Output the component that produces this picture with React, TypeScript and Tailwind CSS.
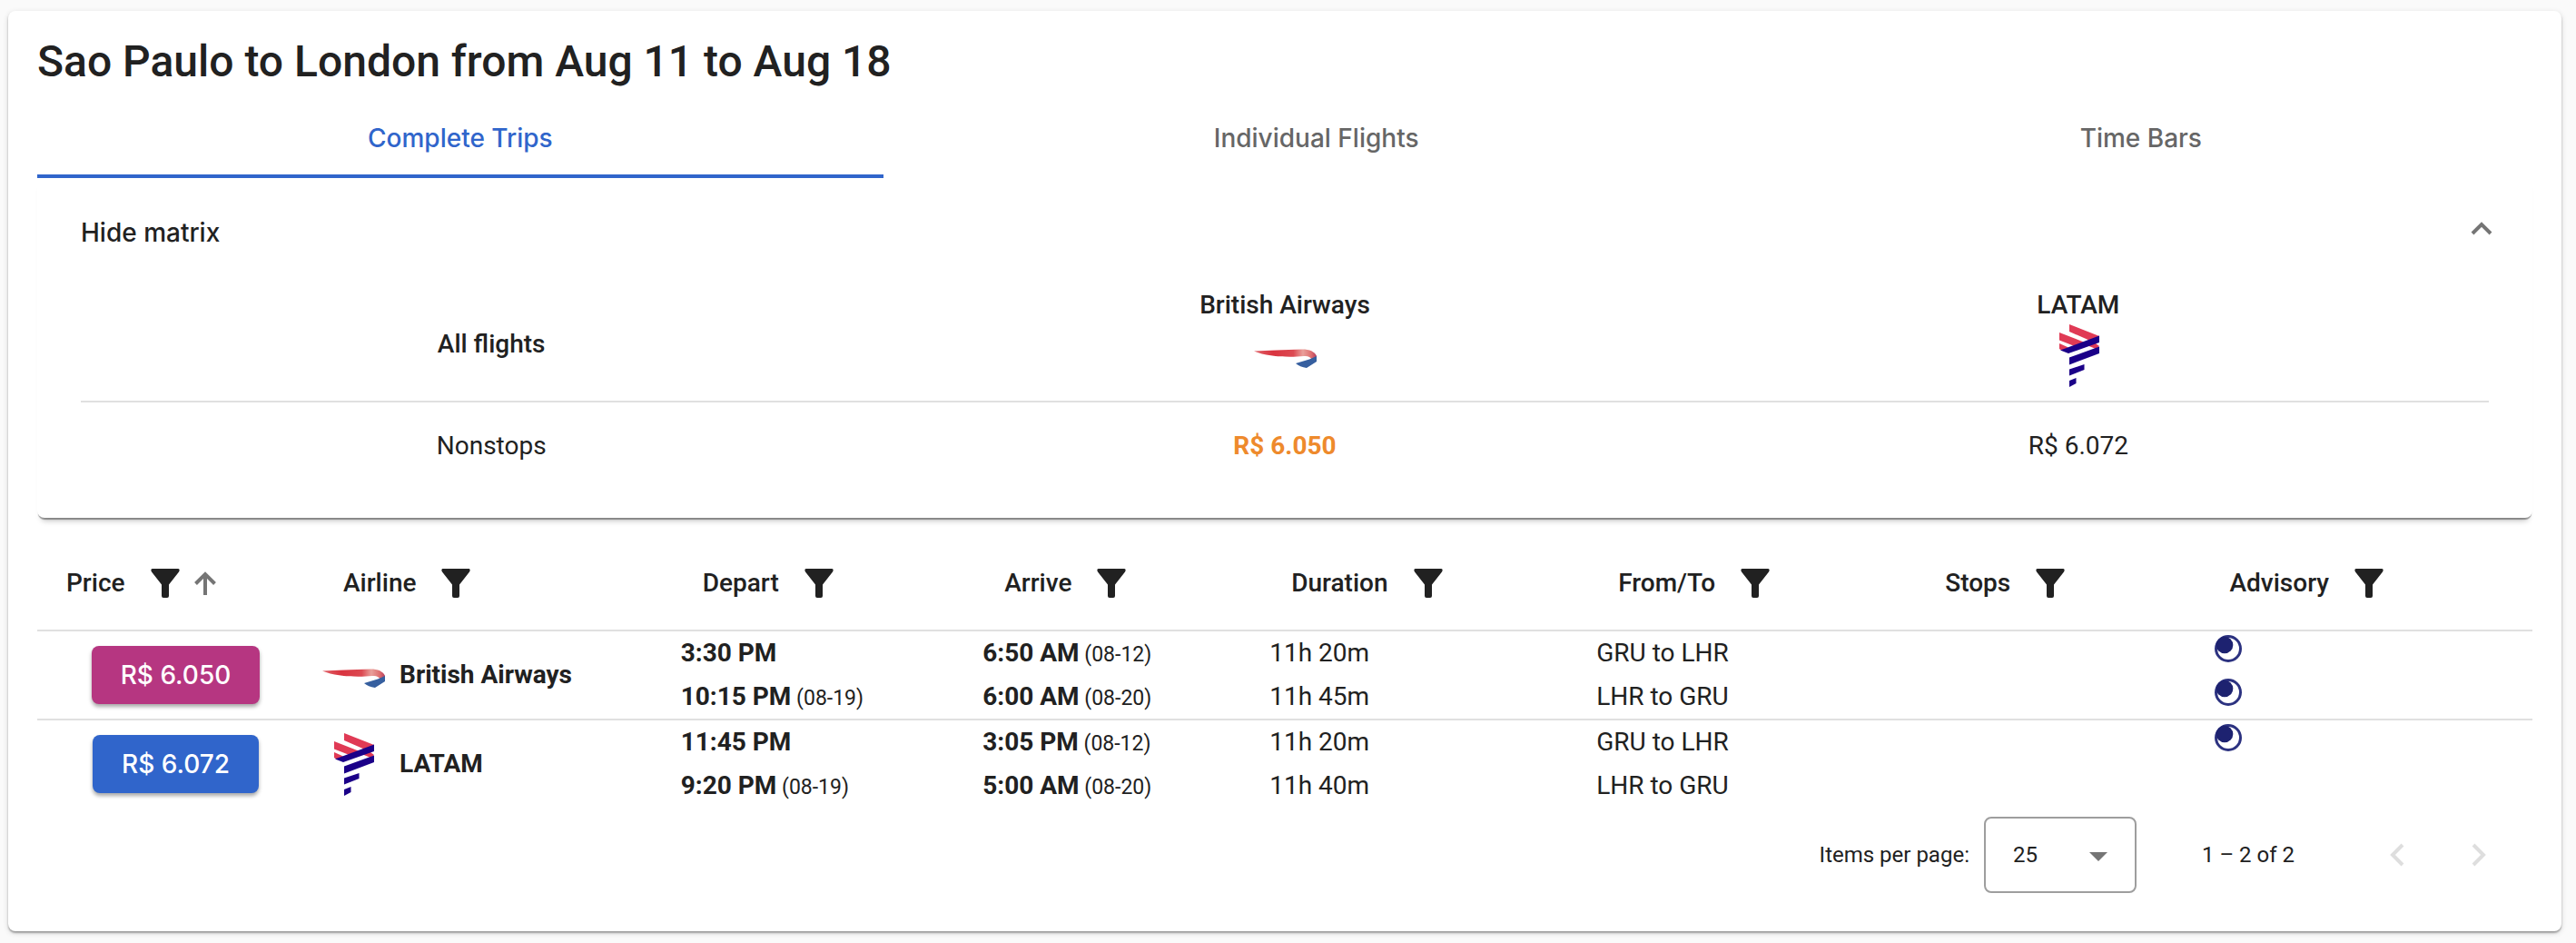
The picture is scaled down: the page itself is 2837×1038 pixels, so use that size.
import { useState } from 'react'

type Leg = {
  depart: string
  departDate?: string
  arrive: string
  arriveDate?: string
  duration: string
  route: string
  overnight?: boolean
}

type Trip = {
  price: string
  best?: boolean
  airline: string
  legs: Leg[]
}

const TABS = ['Complete Trips', 'Individual Flights', 'Time Bars']

const COLUMNS = [
  { label: 'Price', width: 'w-[11.1%]' },
  { label: 'Airline', width: 'w-[14.4%]' },
  { label: 'Depart', width: 'w-[12.1%]' },
  { label: 'Arrive', width: 'w-[11.5%]' },
  { label: 'Duration', width: 'w-[13.1%]' },
  { label: 'From/To', width: 'w-[13.1%]' },
  { label: 'Stops', width: 'w-[11.4%]' },
  { label: 'Advisory', width: 'w-[13.3%]' },
]

const TRIPS: Trip[] = [
  {
    price: 'R$ 6.050',
    best: true,
    airline: 'British Airways',
    legs: [
      { depart: '3:30 PM', arrive: '6:50 AM', arriveDate: '08-12', duration: '11h 20m', route: 'GRU to LHR', overnight: true },
      { depart: '10:15 PM', departDate: '08-19', arrive: '6:00 AM', arriveDate: '08-20', duration: '11h 45m', route: 'LHR to GRU', overnight: true },
    ],
  },
  {
    price: 'R$ 6.072',
    airline: 'LATAM',
    legs: [
      { depart: '11:45 PM', arrive: '3:05 PM', arriveDate: '08-12', duration: '11h 20m', route: 'GRU to LHR', overnight: true },
      { depart: '9:20 PM', departDate: '08-19', arrive: '5:00 AM', arriveDate: '08-20', duration: '11h 40m', route: 'LHR to GRU' },
    ],
  },
]

function BritishAirwaysLogo() {
  return (
    <svg viewBox="0 0 70 70" className="size-[70px] shrink-0" aria-hidden="true">
      <defs>
        <linearGradient id="ba-red" x1="0" x2="1" y1="0" y2="0">
          <stop offset="0" stopColor="#e0646a" />
          <stop offset="0.3" stopColor="#d9333f" />
          <stop offset="0.62" stopColor="#dc4a52" />
          <stop offset="0.77" stopColor="#e9a09b" />
          <stop offset="0.9" stopColor="#df6f70" />
          <stop offset="1" stopColor="#b0375a" />
        </linearGradient>
      </defs>
      <path d="M1 30.500C16 30 34 29 54 28.500C64 28.500 69 32 71 38L65 40C63 36.500 60 35.500 56 36C40 37.500 16 37 1 30.500Z" fill="url(#ba-red)" />
      <path d="M70 36V42L59 49C54 48.500 50 46.500 47 44L62 39.500Z" fill="#365f9f" />
    </svg>
  )
}

function LatamLogo() {
  return (
    <svg viewBox="0 0 70 70" className="size-[70px] shrink-0" aria-hidden="true">
      <g fill="#e03a55">
        <path d="M25 1L58 14L48 19L25 9Z" />
        <path d="M14 10L42 21L32 25.500L14 18.500Z" />
        <path d="M14 22L24 26.500L17 30L14 28Z" />
        <path d="M42 23L50 19L58 25L54 28Z" />
      </g>
      <g fill="#1b0088">
        <path d="M58 13.500V21L24 33L15 29.500Z" />
        <path d="M58 25.500V33L25 45.500V37.500Z" />
        <path d="M41.500 45V51L25 57.500V50.500Z" />
        <path d="M32.500 60V66L25 70V63Z" />
      </g>
    </svg>
  )
}

function AirlineLogo({ name }: { name: string }) {
  return name === 'LATAM' ? <LatamLogo /> : <BritishAirwaysLogo />
}

function OvernightIcon() {
  return (
    <svg viewBox="0 0 30 30" className="size-[30px]" role="img" aria-label="Overnight flight">
      <circle cx="15" cy="15" r="13.500" fill="#fff" stroke="#2c3280" strokeWidth="3" />
      <circle cx="11" cy="11" r="9.300" fill="#1d2270" />
    </svg>
  )
}

function FunnelIcon() {
  return (
    <svg viewBox="0 0 32 32" className="size-8" fill="#212121" aria-hidden="true">
      <path d="M2 0H30C32 0 32 2 31 3.500L20 17.500V30Q20 32 18 32H14Q12 32 12 30V17.500L1 3.500C0 2 0 0 2 0Z" />
    </svg>
  )
}

function SortArrowIcon() {
  return (
    <svg viewBox="0 0 24 26" className="h-[26px] w-6" fill="none" stroke="#757575" strokeWidth="4" aria-hidden="true">
      <path d="M12 26V3M1.500 13.500L12 3L22.500 13.500" />
    </svg>
  )
}

function Chevron({ direction }: { direction: 'up' | 'left' | 'right' }) {
  const d = {
    up: 'M14 29L24 19L34 29',
    left: 'M29 13L18 24L29 35',
    right: 'M19 13L30 24L19 35',
  }[direction]
  return (
    <svg viewBox="0 0 48 48" className="size-12" fill="none" stroke="currentColor" strokeWidth="4" aria-hidden="true">
      <path d={d} />
    </svg>
  )
}

function Time({ time, date }: { time: string; date?: string }) {
  return (
    <div>
      <b className="font-bold">{time}</b>
      {date && <span className="text-[23px] leading-none"> ({date})</span>}
    </div>
  )
}

function PriceMatrix() {
  const [open, setOpen] = useState(true)

  return (
    <section className="rounded-b-lg bg-white px-12 pb-8 shadow-[0_3px_1px_-1px_rgba(0,0,0,0.35),0_8px_6px_-5px_rgba(0,0,0,0.25)]">
      <button
        type="button"
        aria-expanded={open}
        onClick={() => setOpen(!open)}
        className="flex h-[120px] w-full items-center justify-between font-['Inter',sans-serif] font-medium"
      >
        {open ? 'Hide matrix' : 'Show matrix'}
        <span className="-mr-4 pb-2 text-[#757575]"><Chevron direction="up" /></span>
      </button>
      {open && (
        <table className="w-full table-fixed text-center">
          <thead>
            <tr className="border-b-2 border-[#e0e0e0]">
              <th scope="col" className="w-[34.1%] font-medium">All flights</th>
              {TRIPS.map((trip) => (
                <th key={trip.airline} scope="col" className="font-medium last:w-[34.1%]">
                  <div className="flex flex-col items-center pb-[15px] leading-10">
                    {trip.airline}
                    <AirlineLogo name={trip.airline} />
                  </div>
                </th>
              ))}
            </tr>
          </thead>
          <tbody>
            <tr className="h-24">
              <th scope="row" className="font-normal">Nonstops</th>
              {TRIPS.map((trip) => (
                <td key={trip.airline} className={trip.best ? 'font-bold text-[#ee8a2c]' : ''}>{trip.price}</td>
              ))}
            </tr>
          </tbody>
        </table>
      )}
    </section>
  )
}

function TripsTable() {
  return (
    <table className="w-full table-fixed text-left">
      <thead>
        <tr className="h-[124px] border-b-2 border-[#e0e0e0]">
          {COLUMNS.map(({ label, width }) => (
            <th key={label} scope="col" className={`${width} pl-8 pt-5 font-medium`}>
              <div className="flex items-center">
                {label}
                <button type="button" aria-label={`Filter by ${label}`} className="ml-7"><FunnelIcon /></button>
                {label === 'Price' && (
                  <button type="button" aria-label="Sort by price" className="ml-4"><SortArrowIcon /></button>
                )}
              </div>
            </th>
          ))}
        </tr>
      </thead>
      <tbody className="leading-[48px]">
        {TRIPS.map((trip) => (
          <tr key={trip.airline} className="border-b-2 border-[#e0e0e0] last:border-0">
            <td className="text-center">
              <button
                type="button"
                className={`h-16 rounded-lg px-8 align-middle font-['Inter',sans-serif] font-medium text-white shadow-[0_3px_4px_rgba(0,0,0,0.35)] ${trip.best ? 'bg-[#b63681]' : 'bg-[#3065cb]'}`}
              >
                {trip.price}
              </button>
            </td>
            <td className="pl-2">
              <div className="flex items-center gap-4 font-bold">
                <AirlineLogo name={trip.airline} />
                {trip.airline}
              </div>
            </td>
            <td className="pl-2">
              {trip.legs.map((leg) => <Time key={leg.route} time={leg.depart} date={leg.departDate} />)}
            </td>
            <td className="pl-2">
              {trip.legs.map((leg) => <Time key={leg.route} time={leg.arrive} date={leg.arriveDate} />)}
            </td>
            <td className="pl-2">
              {trip.legs.map((leg) => <div key={leg.route}>{leg.duration}</div>)}
            </td>
            <td className="pl-2">
              {trip.legs.map((leg) => <div key={leg.route}>{leg.route}</div>)}
            </td>
            <td />
            <td className="pl-4">
              {trip.legs.map((leg) => (
                <div key={leg.route} className="h-12 pt-1">{leg.overnight && <OvernightIcon />}</div>
              ))}
            </td>
          </tr>
        ))}
      </tbody>
    </table>
  )
}

function Paginator() {
  return (
    <div className="mt-2.5 flex items-center justify-end pr-9 text-2xl">
      <label htmlFor="page-size">Items per page:</label>
      <div className="relative ml-4">
        <select id="page-size" defaultValue="25" className="h-[84px] w-[168px] appearance-none rounded-lg border-2 border-[#9e9e9e] bg-white pl-[30px]">
          <option>10</option>
          <option>25</option>
          <option>50</option>
        </select>
        <svg viewBox="0 0 20 10" className="pointer-events-none absolute top-[39px] right-8 h-[10px] w-5" fill="#757575" aria-hidden="true">
          <path d="M0 0H20L10 10Z" />
        </svg>
      </div>
      <span className="ml-[72px]">1 – 2 of 2</span>
      <div className="ml-[90px] flex gap-10 text-[#dedede]">
        <button type="button" disabled aria-label="Previous page"><Chevron direction="left" /></button>
        <button type="button" disabled aria-label="Next page"><Chevron direction="right" /></button>
      </div>
    </div>
  )
}

export default function App() {
  const [tab, setTab] = useState(TABS[0])

  return (
    <div className="min-h-screen bg-[#fafafa] pt-3 pr-4 pb-3 pl-[9px] font-['Roboto',sans-serif] text-[28px] leading-10 text-[#212121]">
      <main className="rounded-lg bg-white px-8 pt-6 pb-[42px] shadow-[0_2px_2px_rgba(0,0,0,0.3),0_2px_6px_rgba(0,0,0,0.15)]">
        <h1 className="text-5xl leading-[64px] font-medium">Sao Paulo to London from Aug 11 to Aug 18</h1>
        <div role="tablist" className="flex">
          {TABS.map((name) => (
            <button
              key={name}
              type="button"
              role="tab"
              aria-selected={tab === name}
              onClick={() => setTab(name)}
              className={`h-24 flex-auto border-b-4 pt-3 font-['Inter',sans-serif] font-medium ${tab === name ? 'border-[#3065cb] text-[#3065cb]' : 'border-transparent text-[#666666]'}`}
            >
              {name}
            </button>
          ))}
        </div>
        <PriceMatrix />
        <TripsTable />
        <Paginator />
      </main>
    </div>
  )
}
